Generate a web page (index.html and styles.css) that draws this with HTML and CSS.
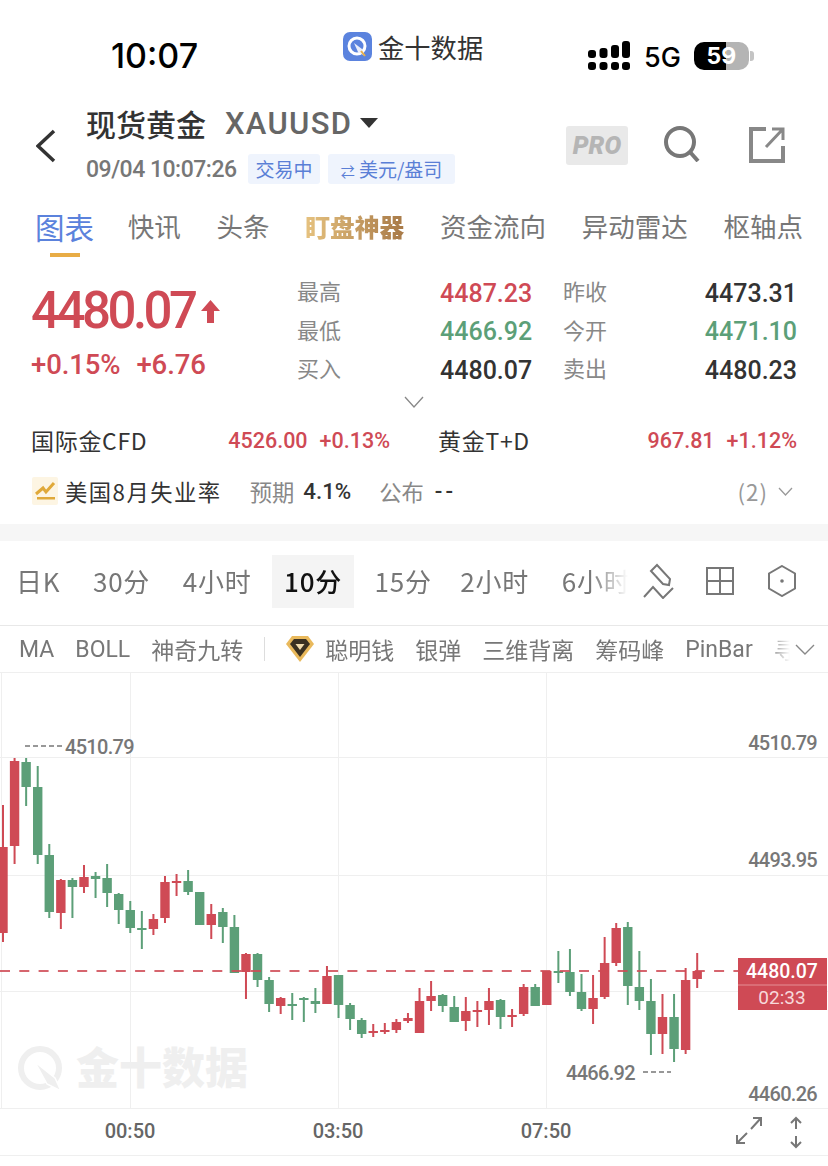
FILE: index.html
```html
<!DOCTYPE html>
<html lang="zh-CN">
<head>
   <meta charset="utf-8">
   <title>现货黄金 XAUUSD</title>
   <link rel="stylesheet" href="styles.css">
</head>
<body>
<div class="page">
   <!-- status bar -->
   <div class="status">
      <div class="time">10:07</div>
      <div class="app">
         <svg class="app-logo" width="29" height="29" viewBox="0 0 29 29">
            <rect width="29" height="29" rx="7" fill="#5b83de"/>
            <circle cx="14" cy="14" r="8" fill="none" stroke="#fff" stroke-width="3"/>
            <path d="M11 11 L19 17 L22 24 L15 20 Z" fill="#e9eefb"/>
            <path d="M18 19 L22 24" stroke="#e8b04a" stroke-width="2"/>
         </svg>
         <span>金十数据</span>
      </div>
      <div class="sys">
         <svg width="43" height="29" viewBox="0 0 43 29" fill="#000">
            <rect x="0" y="9" width="8" height="8" rx="3"/><rect x="0" y="21" width="8" height="8" rx="3"/>
            <rect x="11.5" y="7" width="8" height="10" rx="3"/><rect x="11.5" y="21" width="8" height="8" rx="3"/>
            <rect x="23" y="4" width="8" height="13" rx="3"/><rect x="23" y="21" width="8" height="8" rx="3"/>
            <rect x="34" y="0" width="8" height="17" rx="3"/><rect x="34" y="21" width="8" height="8" rx="3"/>
         </svg>
         <span class="net">5G</span>
         <span class="battery">59</span>
         <span class="battery-cap"></span>
      </div>
   </div>

   <!-- instrument header -->
   <div class="head">
      <svg class="back" width="20" height="34" viewBox="0 0 20 34">
         <path d="M18 2 L2 17 L18 32" fill="none" stroke="#333" stroke-width="3.5"/>
      </svg>
      <div class="head-info">
         <div class="title-row">
            <span class="title">现货黄金</span>
            <span class="symbol">XAUUSD</span>
            <span class="caret"></span>
         </div>
         <div class="sub-row">
            <span class="stamp">09/04 10:07:26</span>
            <span class="badge">交易中</span>
            <span class="badge badge-wide"><small>⇄</small> 美元/盎司</span>
         </div>
      </div>
      <div class="pro">PRO</div>
      <svg class="act-search" width="36" height="36" viewBox="0 0 36 36">
         <circle cx="16" cy="16" r="14" fill="none" stroke="#777" stroke-width="4"/>
         <path d="M26 26 L34 35" stroke="#777" stroke-width="4"/>
      </svg>
      <svg class="act-share" width="36" height="36" viewBox="0 0 36 36" fill="none" stroke="#888" stroke-width="4">
         <path d="M17 2 H2 V34 H34 V19"/>
         <path d="M17 20 L33 3 M23 2 H34 V13" stroke-width="3"/>
      </svg>
   </div>

   <!-- tabs -->
   <div class="tabs">
      <div class="tab tab-on">图表</div>
      <div class="tab">快讯</div>
      <div class="tab">头条</div>
      <div class="tab tab-gold">盯盘神器</div>
      <div class="tab">资金流向</div>
      <div class="tab">异动雷达</div>
      <div class="tab">枢轴点</div>
   </div>

   <!-- quote -->
   <div class="quote">
      <div class="quote-main">
         <div class="last">4480.07<svg width="19" height="23" viewBox="0 0 19 23"><path d="M9.5 0 L19 11 H13 V23 H6 V11 H0 Z" fill="#cf4a55"/></svg></div>
         <div class="change"><span>+0.15%</span><span>+6.76</span></div>
      </div>
      <div class="stats">
         <span class="lbl">最高</span><span class="val up">4487.23</span><span class="lbl">昨收</span><span class="val end">4473.31</span>
         <span class="lbl">最低</span><span class="val down">4466.92</span><span class="lbl">今开</span><span class="val end down">4471.10</span>
         <span class="lbl">买入</span><span class="val">4480.07</span><span class="lbl">卖出</span><span class="val end">4480.23</span>
      </div>
   </div>
   <div class="more">
      <svg width="20" height="12" viewBox="0 0 20 12"><path d="M1 1 L10 11 L19 1" fill="none" stroke="#888" stroke-width="1.3"/></svg>
   </div>

   <div class="related">
      <div class="rel rel-a"><span class="rel-name">国际金CFD</span><span class="rel-num">4526.00</span><span class="rel-num">+0.13%</span></div>
      <div class="rel rel-b"><span class="rel-name">黄金T+D</span><span class="rel-num">967.81</span><span class="rel-num">+1.12%</span></div>
   </div>

   <div class="event">
      <svg class="event-icon" width="26" height="28" viewBox="0 0 26 28">
         <rect width="26" height="28" rx="2" fill="#fdf5e3"/>
         <path d="M4 17 L11 11 L14 15 L22 6" fill="none" stroke="#e0a93a" stroke-width="3"/>
         <rect x="5" y="20" width="18" height="2.5" fill="#e0a93a"/>
      </svg>
      <span class="event-name">美国8月失业率</span>
      <span class="event-lbl event-gap">预期</span>
      <span class="event-val">4.1%</span>
      <span class="event-lbl event-gap2">公布</span>
      <span class="event-val event-dash">--</span>
      <span class="event-count">(2)</span>
      <svg width="15" height="9" viewBox="0 0 15 9"><path d="M1 1 L7.5 8 L14 1" fill="none" stroke="#999" stroke-width="1.3"/></svg>
   </div>

   <div class="band"></div>

   <!-- periods -->
   <div class="periods">
      <div class="period-list">
         <span class="period">日K</span>
         <span class="period">30分</span>
         <span class="period">4小时</span>
         <span class="period period-on">10分</span>
         <span class="period period-tight">15分</span>
         <span class="period">2小时</span>
         <span class="period">6小时</span>
      </div>
      <svg class="tool-ruler" width="32" height="36" viewBox="643 562 32 36" fill="none" stroke="#777" stroke-width="2">
         <path d="M651 570 L657 564 L670 578 L669 584 L663 583 Z"/>
         <path d="M644 596 L653 586 L663 597 L673 587"/>
      </svg>
      <svg class="tool-grid" width="28" height="28" viewBox="0 0 28 28" fill="none" stroke="#777" stroke-width="2">
         <rect x="1" y="1" width="26" height="26"/>
         <path d="M14 1 V27 M1 14 H27"/>
      </svg>
      <svg class="tool-hex" width="28" height="32" viewBox="0 0 28 32" fill="none" stroke="#777" stroke-width="2">
         <path d="M14 1 L27 8.5 V23.5 L14 31 L1 23.5 V8.5 Z"/>
         <circle cx="14" cy="16" r="1.8" fill="#777" stroke="none"/>
      </svg>
   </div>

   <!-- indicators -->
   <div class="indicators">
      <div class="ind-list">
         <span>MA</span>
         <span>BOLL</span>
         <span>神奇九转</span>
         <i class="ind-sep"></i>
         <svg width="28" height="26" viewBox="0 0 28 26">
            <path d="M0 8 L6 0 H22 L28 8 L14 26 Z" fill="#e9b95c"/>
            <path d="M4 8 L8 3 H20 L24 8 L14 21 Z" fill="#3b3122"/>
            <path d="M9.5 8 H18.5 L14 14 Z" fill="#f1dcae"/>
         </svg>
         <span class="ind-smart">聪明钱</span>
         <span>银弹</span>
         <span>三维背离</span>
         <span>筹码峰</span>
         <span>PinBar</span>
         <span>寻</span>
      </div>
      <svg class="ind-more" width="20" height="11" viewBox="0 0 20 11"><path d="M1 1 L10 10 L19 1" fill="none" stroke="#888" stroke-width="1.4"/></svg>
   </div>

   <!-- chart: viewBox uses page y so the prices line up with their levels -->
   <svg class="chart" id="chart" width="828" height="494" viewBox="0 672 828 494">
      <g class="grid">
         <path d="M0 672.5 H828 M0 757.5 H828 M0 875.5 H828 M0 991.5 H828 M0 1108.5 H828 M0 1155.5 H828"/>
         <path d="M1.5 672 V1108 M130.5 672 V1108 M338.5 672 V1108 M546.5 672 V1108"/>
      </g>
      <g class="mark">
         <circle cx="40" cy="1068" r="19" fill="none" stroke="#efefef" stroke-width="6"/>
         <path d="M35 1062 L55 1078 L61 1091 L47 1084 Z" fill="#efefef" stroke="#fff" stroke-width="1.5"/>
         <text x="76" y="1084" class="mark-text">金十数据</text>
      </g>
      <g id="candles"></g>
      <path class="last-line" d="M0 971 H738"/>
      <text x="817" y="750" class="axis" text-anchor="end">4510.79</text>
      <text x="817" y="867" class="axis" text-anchor="end">4493.95</text>
      <text x="817" y="1101" class="axis" text-anchor="end">4460.26</text>
      <path class="hint" d="M25 746 H62"/>
      <text x="65" y="754" class="axis">4510.79</text>
      <text x="566" y="1080" class="axis">4466.92</text>
      <path class="hint" d="M643 1072 H671"/>
      <rect x="738" y="958" width="89" height="52" fill="#cf4a55"/>
      <path d="M738 985 H827" stroke="#e58f96"/>
      <text x="782" y="978" class="tag-price" text-anchor="middle">4480.07</text>
      <text x="782" y="1004" class="tag-time" text-anchor="middle">02:33</text>
      <text x="130" y="1138" class="xlabel" text-anchor="middle">00:50</text>
      <text x="338" y="1138" class="xlabel" text-anchor="middle">03:50</text>
      <text x="546" y="1138" class="xlabel" text-anchor="middle">07:50</text>
      <g class="zoom-icons">
         <path d="M737 1143 L747 1133 M737 1135 V1143 H745"/>
         <path d="M761 1118 L751 1129 M753 1118 H761 V1126"/>
         <path d="M796 1118 V1129 M791 1123 L796 1118 L801 1123"/>
         <path d="M796 1136 V1147 M791 1142 L796 1147 L801 1142"/>
      </g>
   </svg>
</div>
<script src="chart.js"></script>
</body>
</html>
```

FILE: styles.css
```css
* {
   box-sizing: border-box;
}
html, body {
   margin: 0;
   padding: 0;
   background: white;
}
body {
   font-family: "Noto Sans CJK SC", Roboto, sans-serif;
   color: #333;
}
.page {
   width: 828px;
   height: 1166px;
   overflow: hidden;
   background: white;
}
svg {
   display: block;
   flex: none;
}

/* status bar */
.status {
   height: 100px;
   display: flex;
   align-items: flex-start;
}
.time {
   font-family: Inter, sans-serif;
   font-weight: 500;
   font-size: 34px;
   line-height: 40px;
   color: #000;
   margin: 36px 0 0 111px;
   width: 232px;
}
.app {
   display: flex;
   align-items: center;
   gap: 6px;
   margin-top: 32px;
   width: 245px;
   font-size: 26.3px;
   line-height: 25px;
   color: #333;
}
.sys {
   display: flex;
   align-items: center;
   margin-top: 41px;
   height: 29px;
}
.net {
   font-family: Inter, sans-serif;
   font-weight: 500;
   font-size: 27px;
   color: #000;
   margin: 4px 13px 0 13px;
}
.battery {
   width: 55px;
   height: 28px;
   border-radius: 10px;
   background: linear-gradient(to right, #000 58%, #b4b4b4 58%);
   color: white;
   font-family: Inter, sans-serif;
   font-weight: 700;
   font-size: 23px;
   line-height: 28px;
   text-align: center;
}
.battery-cap {
   width: 4px;
   height: 10px;
   margin-left: 1px;
   border-radius: 0 3px 3px 0;
   background: #c4c4c4;
}

/* header */
.head {
   height: 100px;
   display: flex;
   align-items: flex-start;
}
.back {
   margin: 29px 0 0 36px;
}
.head-info {
   margin-left: 31px;
   width: 479px;
}
.title-row {
   display: flex;
   align-items: center;
   height: 46px;
   margin-left: -1px;
}
.title {
   font-size: 30px;
   font-weight: 500;
   color: #333;
}
.symbol {
   font-family: Roboto, sans-serif;
   font-size: 31px;
   font-weight: 500;
   letter-spacing: 1.3px;
   color: #666;
   margin-left: 19px;
}
.caret {
   width: 0;
   height: 0;
   margin: 0 0 0 8px;
   border-left: 9px solid transparent;
   border-right: 9px solid transparent;
   border-top: 10px solid #333;
}
.sub-row {
   display: flex;
   align-items: center;
   height: 30px;
   margin-top: 8px;
}
.stamp {
   font-family: Roboto, sans-serif;
   font-size: 23px;
   font-weight: 500;
   color: #777;
   letter-spacing: -0.5px;
   width: 161px;
   margin-left: -1px;
   margin-right: 1px;
}
.badge {
   height: 30px;
   width: 72px;
   border-radius: 3px;
   margin-right: 8px;
   background: #eff4fd;
   color: #5a7fd6;
   font-size: 19px;
   line-height: 30px;
   text-align: center;
}
.badge small {
   font-size: 14px;
}
.badge-wide {
   width: 127px;
}
.pro {
   width: 62px;
   height: 39px;
   margin-top: 26px;
   border-radius: 3px;
   background: #e9e9e9;
   color: #b5b5b5;
   font-family: Roboto, sans-serif;
   font-style: italic;
   font-weight: 900;
   font-size: 25px;
   line-height: 39px;
   text-align: center;
}
.act-search {
   margin: 26px 0 0 36px;
}
.act-share {
   margin: 27px 0 0 49px;
}

/* tabs */
.tabs {
   height: 72px;
   padding: 0 25px 0 35px;
   display: flex;
   justify-content: space-between;
   align-items: flex-start;
}
.tab {
   font-size: 26.5px;
   line-height: 52px;
   color: #777;
}
.tab-on {
   font-size: 29.5px;
   color: #5b82dc;
   margin-right: -2px;
   position: relative;
}
.tab-on::after {
   content: "";
   position: absolute;
   left: 15px;
   top: 53px;
   width: 30px;
   height: 4px;
   background: #e8ac45;
}
.tab-gold {
   font-size: 24.75px;
   font-weight: 900;
   background: linear-gradient(to right, #e6c27f, #a87a48);
   -webkit-background-clip: text;
   background-clip: text;
   color: transparent;
}

/* quote */
.quote {
   display: flex;
   padding: 0 31px;
   height: 119px;
   margin-top: -1px;
}
.quote-main {
   width: 266px;
}
.last {
   display: flex;
   align-items: center;
   font-family: Roboto, sans-serif;
   font-size: 51px;
   font-weight: 500;
   line-height: 60px;
   letter-spacing: -3.5px;
   color: #cf4a55;
   margin-top: 10px;
}
.last svg {
   margin-left: 6px;
}
.change {
   display: flex;
   gap: 16px;
   margin-top: 9px;
   font-family: Roboto, sans-serif;
   font-size: 27.5px;
   font-weight: 500;
   line-height: 30px;
   letter-spacing: -0.1px;
   color: #cf4a55;
}
.stats {
   width: 500px;
   margin-top: 3px;
   display: grid;
   grid-template-columns: 143px 123px 60px 1fr;
   grid-auto-rows: 38.5px;
   align-items: center;
}
.lbl {
   font-size: 22px;
   color: #888;
   padding-bottom: 6px;
}
.val {
   font-family: Roboto, sans-serif;
   font-size: 25px;
   font-weight: 500;
   color: #333;
}
.val.end {
   text-align: right;
}
.up {
   color: #cf4a55;
}
.val.down {
   color: #5c9f78;
}
.more {
   height: 25px;
   display: flex;
   justify-content: center;
   padding: 6px 0 0 0;
   margin-left: -1px;
}

/* related contracts */
.related {
   display: flex;
   padding: 0 31px;
   height: 50px;
   align-items: center;
}
.rel {
   display: flex;
   align-items: center;
   font-size: 21.5px;
}
.rel-a {
   width: 407px;
   padding-right: 48px;
}
.rel-b {
   flex: 1;
}
.rel-name {
   font-size: 23px;
   letter-spacing: 0.7px;
   color: #333;
   margin-right: auto;
}
.rel-num {
   font-family: Roboto, sans-serif;
   font-weight: 500;
   color: #cf4a55;
   margin-left: 12px;
}

/* calendar line */
.event {
   display: flex;
   align-items: center;
   height: 52px;
   padding: 0 35px 0 32px;
   font-size: 22.3px;
}
.event-name {
   margin-left: 7px;
   letter-spacing: 1.5px;
   color: #333;
}
.event-lbl {
   color: #888;
}
.event-gap {
   margin-left: 28px;
}
.event-gap2 {
   margin-left: 28px;
}
.event-val {
   font-family: Roboto, sans-serif;
   font-weight: 500;
   margin-left: 9px;
   color: #333;
}
.event-dash {
   margin-left: 11px;
   letter-spacing: 3px;
}
.event-count {
   margin-left: auto;
   margin-right: 10px;
   letter-spacing: 1px;
   color: #999;
}
.band {
   height: 17px;
   margin-top: 7px;
   background: #f6f6f6;
}

/* period row */
.periods {
   height: 85px;
   display: flex;
   align-items: center;
   border-bottom: 1px solid #e8e8e8;
   padding: 0 0 4px 4px;
}
.period-list {
   width: 624px;
   display: flex;
   gap: 8.5px;
   overflow: hidden;
   -webkit-mask-image: linear-gradient(to right, black 94%, transparent);
   mask-image: linear-gradient(to right, black 94%, transparent);
}
.period {
   flex: none;
   height: 53px;
   padding: 0 12px;
   font-size: 26px;
   letter-spacing: 0.8px;
   line-height: 51px;
   color: #777;
}
.period-on {
   background: #f4f4f4;
   color: #111;
   font-weight: 500;
}
.period-tight {
   margin-right: -4px;
}
.tool-ruler {
   margin-left: 15px;
}
.tool-grid {
   margin-left: 31px;
}
.tool-hex {
   margin-left: 34px;
}

/* indicator row */
.indicators {
   height: 46px;
   display: flex;
   align-items: center;
   padding-left: 19px;
}
.ind-list {
   width: 771px;
   display: flex;
   align-items: center;
   gap: 21px;
   overflow: hidden;
   font-size: 23px;
   color: #777;
   -webkit-mask-image: linear-gradient(to right, black 97%, transparent);
   mask-image: linear-gradient(to right, black 97%, transparent);
}
.ind-list span {
   flex: none;
   font-family: Roboto, "Noto Sans CJK SC", sans-serif;
}
.ind-sep {
   flex: none;
   width: 1px;
   height: 24px;
   background: #ddd;
}
.ind-smart {
   margin-left: -10px;
}
.ind-more {
   margin-left: 5px;
}

/* chart */
.chart {
   font-family: Roboto, sans-serif;
}
.grid path {
   fill: none;
   stroke: #efefef;
}
.mark-text {
   font-family: "Noto Sans CJK SC", sans-serif;
   font-weight: 900;
   font-size: 43px;
   fill: #efefef;
}
.last-line {
   fill: none;
   stroke: #cf4a55;
   stroke-width: 2;
   stroke-dasharray: 10 9.3;
   opacity: 0.85;
}
.hint {
   fill: none;
   stroke: #777;
   stroke-width: 1.5;
   stroke-dasharray: 5 3;
}
.axis {
   font-size: 20px;
   font-weight: 500;
   fill: #777;
   letter-spacing: -0.7px;
}
.tag-price {
   font-size: 19.5px;
   font-weight: 500;
   fill: white;
}
.tag-time {
   font-size: 19px;
   fill: #f7d9db;
}
.xlabel {
   font-size: 20px;
   font-weight: 500;
   fill: #666;
}
.zoom-icons path {
   fill: none;
   stroke: #777;
   stroke-width: 2;
}
.wick-up, .body-up {
   fill: #cf4a55;
}
.wick-dn, .body-dn {
   fill: #5c9f78;
}
```

FILE: chart.js
```js
// r = red, g = green: [colour, high, body top, body bottom, low]
var candles = [
   ["r",805,847,933,942], ["r",758,761,846,864], ["g",758,762,787,806], ["g",766,787,855,864],
   ["g",844,855,912,918], ["r",879,880,913,929], ["g",878,880,887,918], ["r",865,877,887,893],
   ["g",872,876,879,898], ["g",864,878,893,907], ["g",893,894,910,924], ["g",901,910,928,933],
   ["g",911,928,929,949], ["r",914,919,929,935], ["r",876,882,918,923], ["r",874,881,882,896],
   ["g",870,881,892,895], ["g",892,892,925,925], ["r",904,914,925,939], ["g",908,912,927,943],
   ["g",915,927,973,973], ["r",953,954,972,999], ["g",953,954,980,987], ["g",977,980,1004,1012],
   ["r",997,998,1006,1014], ["g",993,1004,1005,1020], ["g",997,998,1000,1022], ["g",988,1001,1004,1013],
   ["r",966,976,1004,1004], ["g",975,975,1005,1018], ["g",1003,1005,1019,1030], ["g",1018,1020,1034,1038],
   ["r",1024,1031,1033,1037], ["r",1023,1030,1031,1034], ["r",1019,1022,1030,1033], ["r",1013,1018,1021,1023],
   ["r",988,1001,1033,1033], ["r",981,996,1001,1011], ["g",994,995,1006,1012], ["g",996,1007,1022,1022],
   ["r",997,1011,1021,1031], ["r",1001,1010,1011,1027], ["r",988,1001,1010,1025], ["g",999,1000,1017,1029],
   ["r",1009,1015,1017,1027], ["r",984,987,1014,1016], ["g",984,987,1006,1006], ["r",971,971,1005,1005],
   ["g",951,971,972,983], ["g",949,972,992,996], ["g",974,992,1009,1011], ["r",975,998,1009,1024],
   ["r",937,963,997,999], ["r",923,928,963,966], ["g",922,927,986,1005], ["g",951,987,1001,1010],
   ["g",979,1001,1034,1055], ["r",994,1017,1034,1054], ["g",994,1017,1049,1062], ["r",968,980,1050,1054],
   ["r",953,971,979,988]
];

var svgNS = "http://www.w3.org/2000/svg";
var group = document.getElementById("candles");

function addRect(x, y, w, h, cls) {
   var r = document.createElementNS(svgNS, "rect");
   r.setAttribute("x", x);
   r.setAttribute("y", y);
   r.setAttribute("width", w);
   r.setAttribute("height", h);
   r.setAttribute("class", cls);
   group.appendChild(r);
}

candles.forEach(function(c, i) {
   var x = 3 + i * 11.57;
   var kind = c[0] == "r" ? "up" : "dn";
   addRect(x - 1, c[1], 2, c[4] - c[1], "wick-" + kind);
   addRect(x - 4.7, c[2], 9.4, Math.max(c[3] - c[2], 2), "body-" + kind);
});
```
